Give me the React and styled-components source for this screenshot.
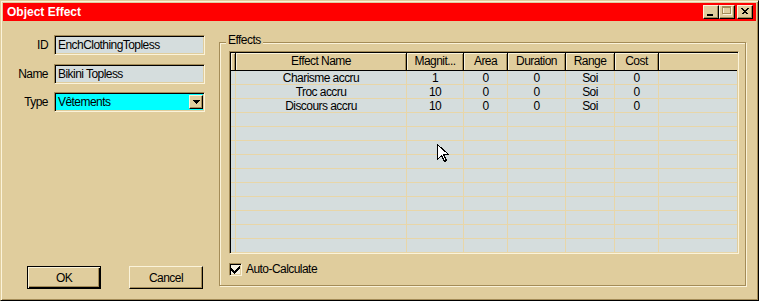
import React from "react";
import styled, { createGlobalStyle } from "styled-components";

const C = {
  face: "#e0cd9d",
  light: "#fbf3da",
  shadow: "#a48c58",
  dark: "#000",
  field: "#d5dddd",
  grid: "#e8d6a8",
  title: "#ff0000",
};

const FONT = `"Liberation Sans Narrow", "Liberation Sans", Arial, sans-serif`;

const Global = createGlobalStyle`
  html, body { margin: 0; padding: 0; width: 759px; height: 301px; overflow: hidden; background: ${C.face}; }
  * { box-sizing: border-box; }
`;

const Window = styled.div`
  position: relative;
  width: 759px;
  height: 301px;
  background: ${C.face};
  border: 1px solid;
  border-color: ${C.face} ${C.dark} ${C.dark} ${C.face};
  box-shadow: inset 1px 1px 0 ${C.light}, inset -1px -1px 0 ${C.shadow};
  padding: 2px;
  display: flex;
  flex-direction: column;
  font-family: ${FONT};
  font-size: 12px;
  letter-spacing: -0.55px;
  color: #000;
`;

const TitleBar = styled.div`
  height: 18px;
  flex: none;
  background: ${C.title};
  display: flex;
  align-items: center;
  padding: 0 3px 0 4px;
`;

const Title = styled.div`
  flex: 1;
  color: #fff;
  font-family: "Liberation Sans", Arial, sans-serif;
  font-weight: bold;
  font-size: 12px;
  letter-spacing: 0;
  line-height: 18px;
`;

const CaptionButtons = styled.div`
  display: flex;
  align-items: center;
`;

const CaptionButton = styled.div`
  width: 16px;
  height: 14px;
  margin-left: ${(p) => (p.$gap ? "2px" : "0")};
  background: ${C.face};
  border: 1px solid;
  border-color: ${C.light} ${C.dark} ${C.dark} ${C.light};
  box-shadow: inset -1px -1px 0 ${C.shadow};
  display: flex;
  svg { display: block; }
`;

const Body = styled.div`
  flex: 1;
  display: flex;
  min-height: 0;
`;

const LeftPanel = styled.div`
  width: 216px;
  flex: none;
  display: flex;
  flex-direction: column;
  padding: 14px 0 9px 0;
`;

const Fields = styled.div`
  display: grid;
  grid-template-columns: 51px 151px;
  grid-auto-rows: 20px;
  row-gap: 8.5px;
  align-items: center;
`;

const Label = styled.div`
  text-align: right;
  padding-right: 6px;
  line-height: 20px;
`;

const sunken = `
  border: 1px solid;
  border-color: ${C.shadow} ${C.light} ${C.light} ${C.shadow};
  box-shadow: inset 1px 1px 0 ${C.dark}, inset -1px -1px 0 ${C.face};
`;

const TextBox = styled.div`
  ${sunken}
  height: 20px;
  background: ${C.field};
  padding: 0 0 0 3px;
  line-height: 18px;
  white-space: nowrap;
  overflow: hidden;
`;

const Combo = styled.div`
  ${sunken}
  height: 20px;
  background: #00ffff;
  display: flex;
  padding: 2px 1px 2px 2px;
`;

const ComboText = styled.div`
  flex: 1;
  padding-left: 1px;
  line-height: 15px;
`;

const DropButton = styled.div`
  width: 14px;
  background: ${C.face};
  border: 1px solid;
  border-color: ${C.light} ${C.dark} ${C.dark} ${C.light};
  box-shadow: inset -1px -1px 0 ${C.shadow};
  display: flex;
  align-items: center;
  justify-content: center;
`;

const ButtonRow = styled.div`
  margin-top: auto;
  display: flex;
  gap: 28px;
  padding-left: 24px;
`;

const PushButton = styled.div`
  width: 74px;
  height: 23px;
  background: ${C.face};
  border: 1px solid;
  border-color: ${(p) => (p.$default ? `${C.dark}` : `${C.light} ${C.dark} ${C.dark} ${C.light}`)};
  box-shadow: ${(p) =>
    p.$default
      ? `inset 1px 1px 0 ${C.light}, inset -1px -1px 0 ${C.dark}, inset -2px -2px 0 ${C.shadow}`
      : `inset -1px -1px 0 ${C.shadow}`};
  display: flex;
  align-items: center;
  justify-content: center;
  line-height: 14px;
  padding-top: 1px;
`;

const GroupBox = styled.fieldset`
  flex: 1;
  min-width: 0;
  margin: 12px 10px 12px 0;
  padding: 0 6px 0 9px;
  border: 1px solid ${C.shadow};
  box-shadow: inset 1px 1px 0 ${C.light}, 1px 1px 0 ${C.light};
`;

const Legend = styled.legend`
  margin-left: -3px;
  padding: 0 2px 4px 2px;
  line-height: 14px;
  background: ${C.face};
`;

const COLS = "5px 171px 57px 44px 58px 49px 44px 1fr";

const ListView = styled.div`
  width: 510px;
  height: 203px;
  overflow: hidden;
  border: 1px solid;
  border-color: ${C.shadow} ${C.light} ${C.light} ${C.shadow};
  box-shadow: inset 1px 1px 0 ${C.dark}, inset -1px -1px 0 ${C.face};
  padding: 1px;
  background: ${C.field};
`;

const HeaderRow = styled.div`
  display: grid;
  grid-template-columns: ${COLS};
  height: 18px;
  background: ${C.face};
  border-bottom: 1px solid ${C.dark};
`;

const HeaderCell = styled.div`
  border-right: ${(p) => (p.$last ? "none" : `1px solid ${C.dark}`)};
  box-shadow: inset 1px 1px 0 ${C.light}, inset -1px 0 0 ${(p) => (p.$last ? "transparent" : C.shadow)};
  text-align: center;
  line-height: 17px;
  white-space: nowrap;
  overflow: hidden;
`;

const Row = styled.div`
  display: grid;
  grid-template-columns: ${COLS};
  height: 14px;
`;

const Cell = styled.div`
  border-bottom: 1px solid ${C.grid};
  border-right: ${(p) => (p.$last ? "none" : `1px solid ${C.grid}`)};
  text-align: center;
  line-height: 13px;
  padding-top: 1px;
  white-space: nowrap;
  overflow: hidden;
`;

const CheckRow = styled.label`
  display: flex;
  align-items: center;
  gap: 4px;
  margin-top: 9px;
  line-height: 13px;
`;

const CheckBox = styled.span`
  width: 13px;
  height: 13px;
  flex: none;
  border: 1px solid;
  border-color: ${C.shadow} ${C.light} ${C.light} ${C.shadow};
  box-shadow: inset 1px 1px 0 ${C.dark}, inset -1px -1px 0 ${C.face};
  background: #f6f1e2;
  display: flex;
  svg { display: block; }
`;

const Cursor = styled.svg`
  position: absolute;
  left: 436px;
  top: 143px;
  pointer-events: none;
`;

const headers = ["", "Effect Name", "Magnit...", "Area", "Duration", "Range", "Cost", ""];
const data = [
  ["Charisme accru", "1", "0", "0", "Soi", "0"],
  ["Troc accru", "10", "0", "0", "Soi", "0"],
  ["Discours accru", "10", "0", "0", "Soi", "0"],
];
const rows = [...data, ...Array.from({ length: 10 }, () => ["", "", "", "", "", ""])];

export default function App() {
  return (
    <>
      <Global />
      <Window>
        <TitleBar>
          <Title>Object Effect</Title>
          <CaptionButtons>
            <CaptionButton>
              <svg width="14" height="12" viewBox="0 0 14 12" shapeRendering="crispEdges">
                <rect x="3" y="8" width="6" height="2" fill="#000" />
              </svg>
            </CaptionButton>
            <CaptionButton>
              <svg width="14" height="12" viewBox="0 0 14 12" shapeRendering="crispEdges">
                <rect x="3.5" y="1.5" width="8" height="7" fill="none" stroke={C.light} />
                <rect x="2.5" y="0.5" width="8" height="7" fill="none" stroke={C.shadow} />
                <line x1="2" y1="1.5" x2="11" y2="1.5" stroke={C.shadow} />
              </svg>
            </CaptionButton>
            <CaptionButton $gap>
              <svg width="14" height="12" viewBox="0 0 14 12" shapeRendering="crispEdges">
                <path d="M3.5 2.5 L9.5 8.5 M4.5 2.5 L10.5 8.5 M9.5 2.5 L3.5 8.5 M10.5 2.5 L4.5 8.5" stroke="#000" strokeWidth="1" />
              </svg>
            </CaptionButton>
          </CaptionButtons>
        </TitleBar>
        <Body>
          <LeftPanel>
            <Fields>
              <Label>ID</Label>
              <TextBox>EnchClothingTopless</TextBox>
              <Label>Name</Label>
              <TextBox>Bikini Topless</TextBox>
              <Label>Type</Label>
              <Combo>
                <ComboText>Vêtements</ComboText>
                <DropButton>
                  <svg width="7" height="4" viewBox="0 0 7 4" shapeRendering="crispEdges">
                    <path d="M0 0 H7 L3.5 4 Z" fill="#000" />
                  </svg>
                </DropButton>
              </Combo>
            </Fields>
            <ButtonRow>
              <PushButton $default>OK</PushButton>
              <PushButton>Cancel</PushButton>
            </ButtonRow>
          </LeftPanel>
          <GroupBox>
            <Legend>Effects</Legend>
            <ListView>
              <HeaderRow>
                {headers.map((h, i) => (
                  <HeaderCell key={i} $last={i === headers.length - 1}>
                    {h}
                  </HeaderCell>
                ))}
              </HeaderRow>
              {rows.map((r, ri) => (
                <Row key={ri}>
                  <Cell />
                  {r.map((v, ci) => (
                    <Cell key={ci}>{v}</Cell>
                  ))}
                  <Cell $last />
                </Row>
              ))}
            </ListView>
            <CheckRow>
              <CheckBox>
                <svg width="11" height="11" viewBox="0 0 11 11" shapeRendering="crispEdges">
                  <path d="M1 4 V7 L4 10 L10 4 V1 L4 7 Z" fill="#000" />
                </svg>
              </CheckBox>
              Auto-Calculate
            </CheckRow>
          </GroupBox>
        </Body>
        <Cursor width="12" height="19" viewBox="0 0 12 19" shapeRendering="crispEdges">
          <path
            d="M0.5 0.5 L0.5 15.5 L4.5 11.5 L7.5 17.5 L9.5 16.5 L6.5 10.5 L11.5 10.5 Z"
            fill="#fff"
            stroke="#000"
            strokeWidth="1"
          />
        </Cursor>
      </Window>
    </>
  );
}
